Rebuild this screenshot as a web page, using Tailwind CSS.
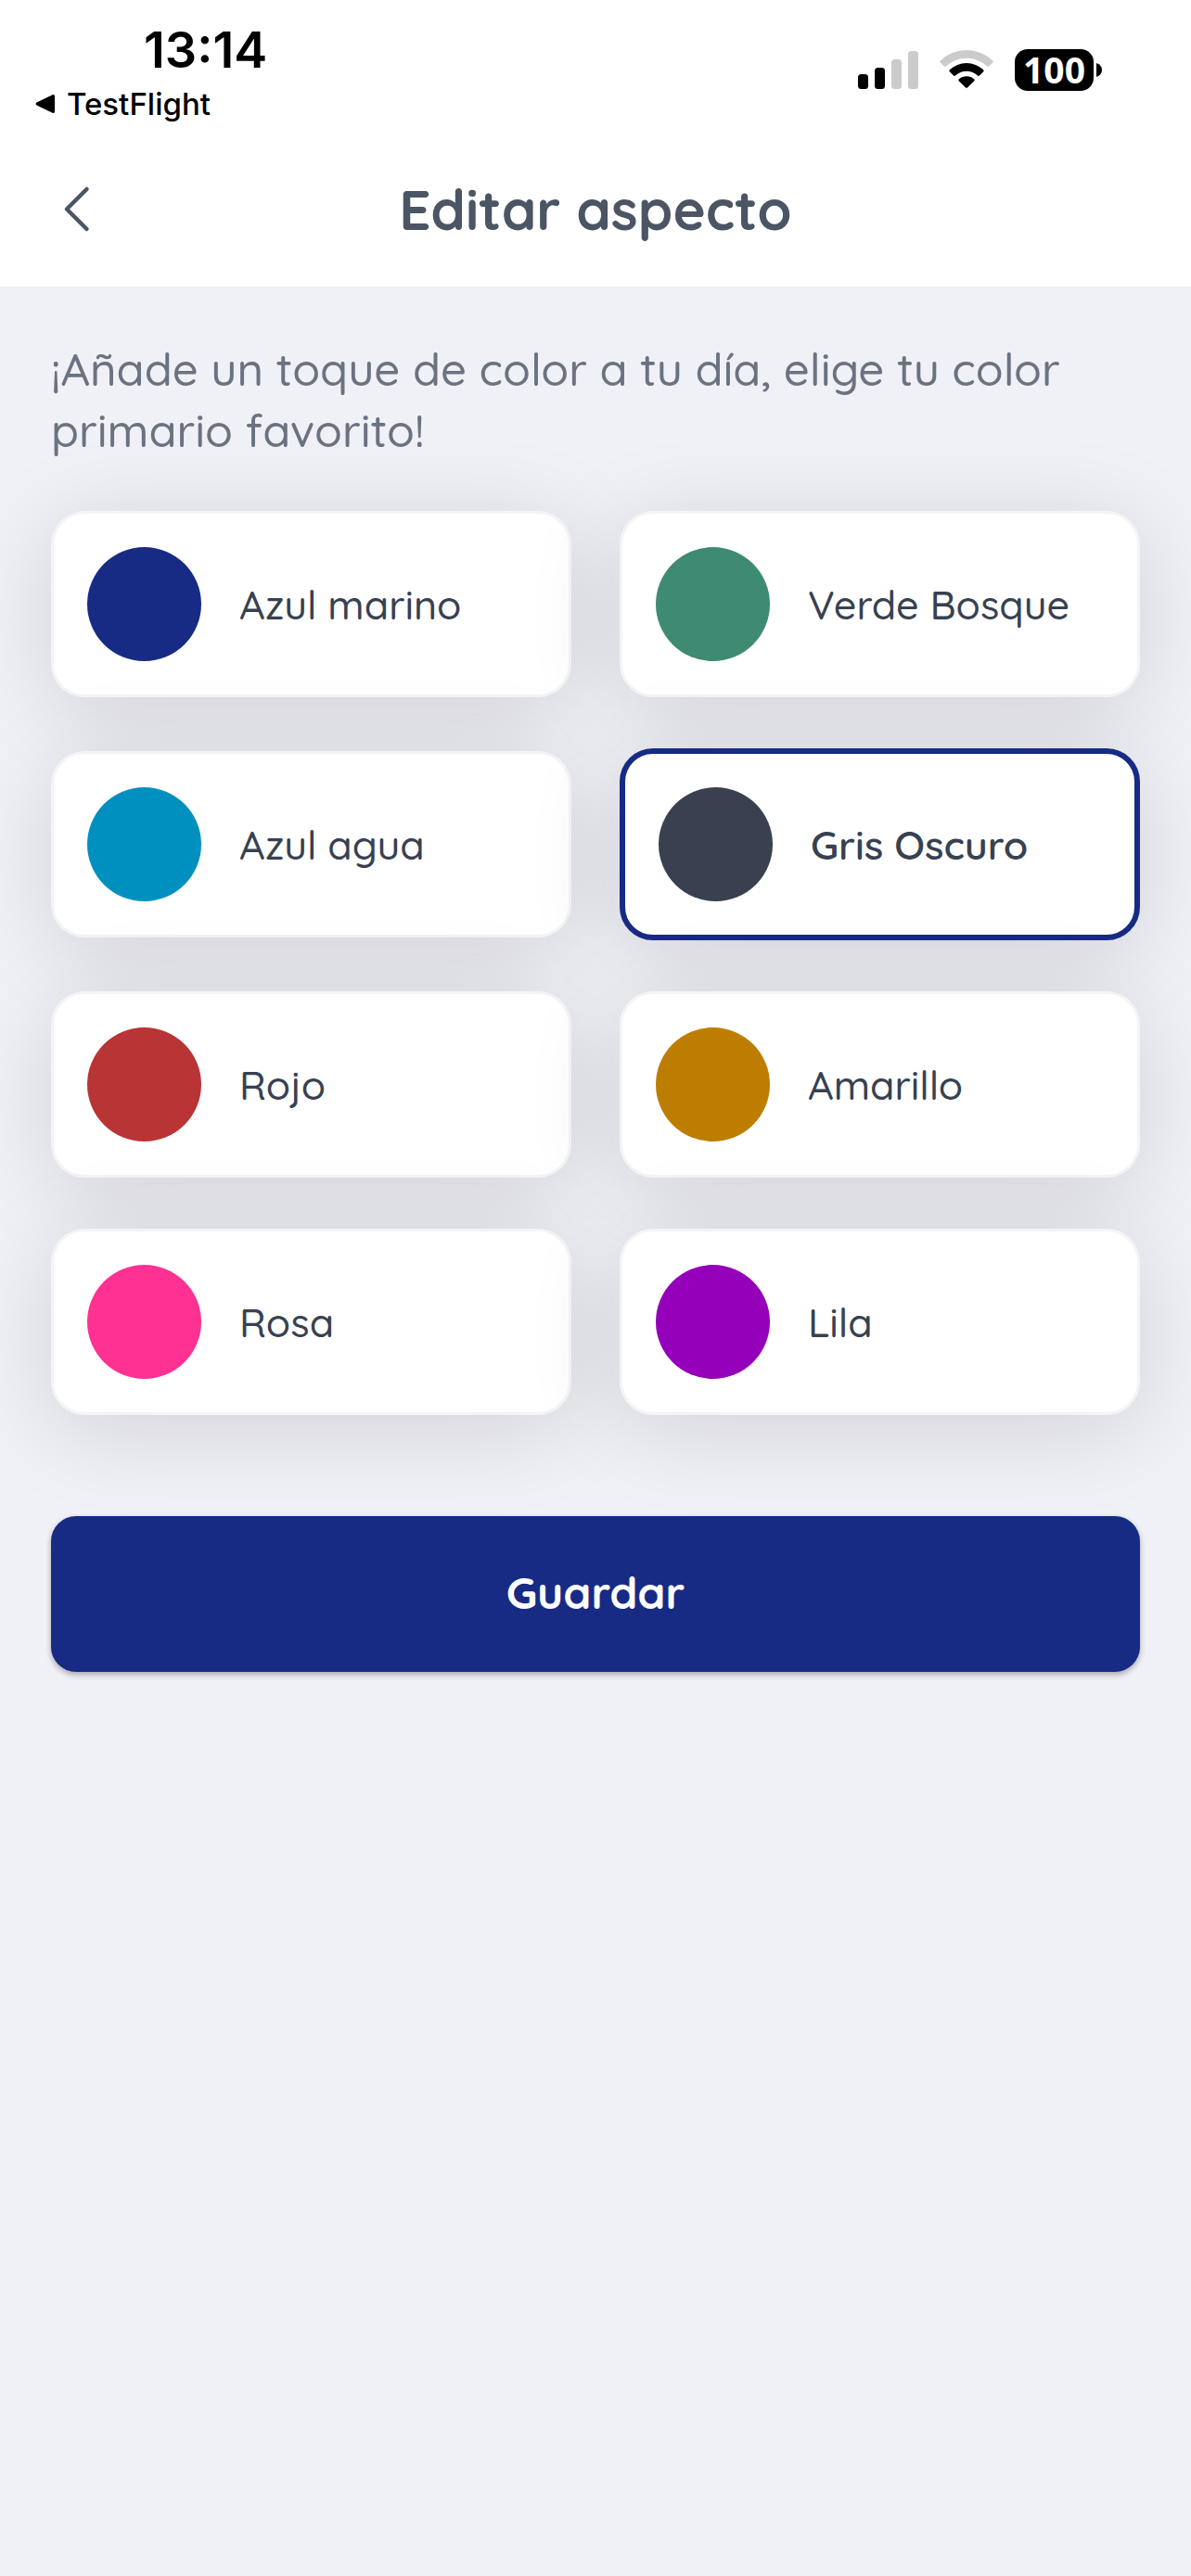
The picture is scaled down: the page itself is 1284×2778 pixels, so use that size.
<!DOCTYPE html>
<html lang="es">

<head>
    <title>Editar aspecto</title>
    <meta charset="utf-8">
    <meta name="viewport" content="width=device-width, initial-scale=1.0">
    <script src="https://cdn.jsdelivr.net/npm/@tailwindcss/browser@4"></script>
</head>

<body class="bg-[#f0f1f7] min-h-screen font-['Quicksand','Open_Sans',sans-serif]">
    <!-- Header -->
    <header class="bg-white">
        <!-- Status bar -->
        <div class="flex justify-between items-start pl-9 pr-24 pt-6 text-black font-['Inter',sans-serif]">
            <div>
                <div class="pl-[119px] text-[54px] leading-[60px] font-semibold">13:14</div>
                <a href="#" class="flex items-center gap-3 text-[33px] leading-[56px] font-medium">
                    <svg class="w-6 h-6" viewBox="0 0 24 24" fill="currentColor">
                        <path d="M4 10.2 20.6 2.2Q23 1.4 23 4v16q0 2.600-2.400 1.800L4 13.800Q1 12 4 10.200Z" />
                    </svg>
                    TestFlight
                </a>
            </div>
            <div class="flex items-center gap-[23px] pt-7">
                <svg class="w-[65px] h-[46px]" viewBox="0 0 65 46">
                    <rect x="0" y="28" width="11" height="16" rx="3.500" />
                    <rect x="18" y="21" width="11" height="23" rx="3.500" />
                    <rect x="36" y="12" width="11" height="32" rx="3.500" fill="#cbcbcb" />
                    <rect x="54" y="3" width="11" height="41" rx="3.500" fill="#cbcbcb" />
                </svg>
                <svg class="w-[58px] h-[46px]" viewBox="0 0 58 46">
                    <path d="M0.800 13.500Q-0.200 14.500 0.800 15.500L5 19.600Q6 20.400 7 19.500A32 32 0 0 1 51 19.500Q52 20.400 53 19.600L57.200 15.500Q58.200 14.500 57.200 13.500A40.500 40.500 0 0 0 0.800 13.500Z" fill="#cbcbcb" />
                    <path d="M10.800 23.300Q9.800 24.300 10.800 25.300L15 29.500Q16 30.300 17 29.400A17.500 17.500 0 0 1 41 29.400Q42 30.300 43 29.500L47.200 25.300Q48.200 24.300 47.200 23.300A26.500 26.500 0 0 0 10.800 23.300Z" />
                    <path d="M20.700 33.500Q19.800 34.400 20.700 35.300L28 42.400Q29 43.300 30 42.400L37.300 35.300Q38.200 34.400 37.300 33.500A12.500 12.500 0 0 0 20.700 33.500Z" />
                </svg>
                <div class="flex items-center gap-[3px]">
                    <div class="w-[85px] h-[45px] rounded-[14px] bg-black text-white text-[39px] leading-[44px] font-bold text-center font-['Open_Sans',sans-serif]">100</div>
                    <svg class="w-[6px] h-[15px]" viewBox="0 0 6 15">
                        <path d="M0 0Q6 2 6 7.500T0 15Z" />
                    </svg>
                </div>
            </div>
        </div>
        <!-- Title bar -->
        <div class="grid grid-cols-[60px_1fr_60px] items-center px-[54px] pt-[38px] pb-9 text-[#4b5563]">
            <button type="button" aria-label="Volver" class="cursor-pointer">
                <svg class="w-[60px] h-[60px]" viewBox="0 0 60 60" fill="none" stroke="currentColor" stroke-width="4.500" stroke-linecap="round" stroke-linejoin="round">
                    <path d="M39.500 8 18 29.500l21.500 21.500" />
                </svg>
            </button>
            <h1 class="text-[60px] leading-[95px] font-bold text-center">Editar aspecto</h1>
        </div>
    </header>

    <!-- Content -->
    <form class="px-[55px] pt-14">
        <p id="intro" class="text-[49px] leading-[66px] font-medium text-[#6b7280]">¡Añade un toque de color a tu día, elige tu color primario favorito!</p>

        <div role="radiogroup" aria-labelledby="intro" class="grid grid-cols-2 items-center gap-x-[52px] gap-y-[55px] mt-[54px] text-[43px] leading-[60px] font-medium text-[#374151]">
            <label class="flex items-center gap-[41px] p-9 bg-white border-3 border-gray-100 rounded-[36px] shadow-[0_15px_100px_rgba(0,0,0,0.13)] cursor-pointer has-[:checked]:border-6 has-[:checked]:border-[#172b85] has-[:checked]:font-semibold">
                <input type="radio" name="color" value="azul-marino" class="sr-only">
                <span class="w-[123px] h-[123px] shrink-0 rounded-full bg-[#172b85]"></span>
                Azul marino
            </label>
            <label class="flex items-center gap-[41px] p-9 bg-white border-3 border-gray-100 rounded-[36px] shadow-[0_15px_100px_rgba(0,0,0,0.13)] cursor-pointer has-[:checked]:border-6 has-[:checked]:border-[#172b85] has-[:checked]:font-semibold">
                <input type="radio" name="color" value="verde-bosque" class="sr-only">
                <span class="w-[123px] h-[123px] shrink-0 rounded-full bg-[#3f8a72]"></span>
                Verde Bosque
            </label>
            <label class="flex items-center gap-[41px] p-9 bg-white border-3 border-gray-100 rounded-[36px] shadow-[0_15px_100px_rgba(0,0,0,0.13)] cursor-pointer has-[:checked]:border-6 has-[:checked]:border-[#172b85] has-[:checked]:font-semibold">
                <input type="radio" name="color" value="azul-agua" class="sr-only">
                <span class="w-[123px] h-[123px] shrink-0 rounded-full bg-[#0090bf]"></span>
                Azul agua
            </label>
            <label class="flex items-center gap-[41px] p-9 bg-white border-3 border-gray-100 rounded-[36px] shadow-[0_15px_100px_rgba(0,0,0,0.13)] cursor-pointer has-[:checked]:border-6 has-[:checked]:border-[#172b85] has-[:checked]:font-semibold">
                <input type="radio" name="color" value="gris-oscuro" class="sr-only" checked>
                <span class="w-[123px] h-[123px] shrink-0 rounded-full bg-[#394150]"></span>
                Gris Oscuro
            </label>
            <label class="flex items-center gap-[41px] p-9 bg-white border-3 border-gray-100 rounded-[36px] shadow-[0_15px_100px_rgba(0,0,0,0.13)] cursor-pointer has-[:checked]:border-6 has-[:checked]:border-[#172b85] has-[:checked]:font-semibold">
                <input type="radio" name="color" value="rojo" class="sr-only">
                <span class="w-[123px] h-[123px] shrink-0 rounded-full bg-[#b93434]"></span>
                Rojo
            </label>
            <label class="flex items-center gap-[41px] p-9 bg-white border-3 border-gray-100 rounded-[36px] shadow-[0_15px_100px_rgba(0,0,0,0.13)] cursor-pointer has-[:checked]:border-6 has-[:checked]:border-[#172b85] has-[:checked]:font-semibold">
                <input type="radio" name="color" value="amarillo" class="sr-only">
                <span class="w-[123px] h-[123px] shrink-0 rounded-full bg-[#bd7e00]"></span>
                Amarillo
            </label>
            <label class="flex items-center gap-[41px] p-9 bg-white border-3 border-gray-100 rounded-[36px] shadow-[0_15px_100px_rgba(0,0,0,0.13)] cursor-pointer has-[:checked]:border-6 has-[:checked]:border-[#172b85] has-[:checked]:font-semibold">
                <input type="radio" name="color" value="rosa" class="sr-only">
                <span class="w-[123px] h-[123px] shrink-0 rounded-full bg-[#ff3192]"></span>
                Rosa
            </label>
            <label class="flex items-center gap-[41px] p-9 bg-white border-3 border-gray-100 rounded-[36px] shadow-[0_15px_100px_rgba(0,0,0,0.13)] cursor-pointer has-[:checked]:border-6 has-[:checked]:border-[#172b85] has-[:checked]:font-semibold">
                <input type="radio" name="color" value="lila" class="sr-only">
                <span class="w-[123px] h-[123px] shrink-0 rounded-full bg-[#9500bb]"></span>
                Lila
            </label>
        </div>

        <button type="submit" class="w-full mt-[109px] pt-[52px] pb-14 rounded-[27px] bg-[#172b85] text-white text-[48px] leading-[60px] font-bold shadow-[0_3px_6px_rgba(0,0,0,0.3)] cursor-pointer">Guardar</button>
    </form>
    <!-- Close Content -->
</body>

</html>
